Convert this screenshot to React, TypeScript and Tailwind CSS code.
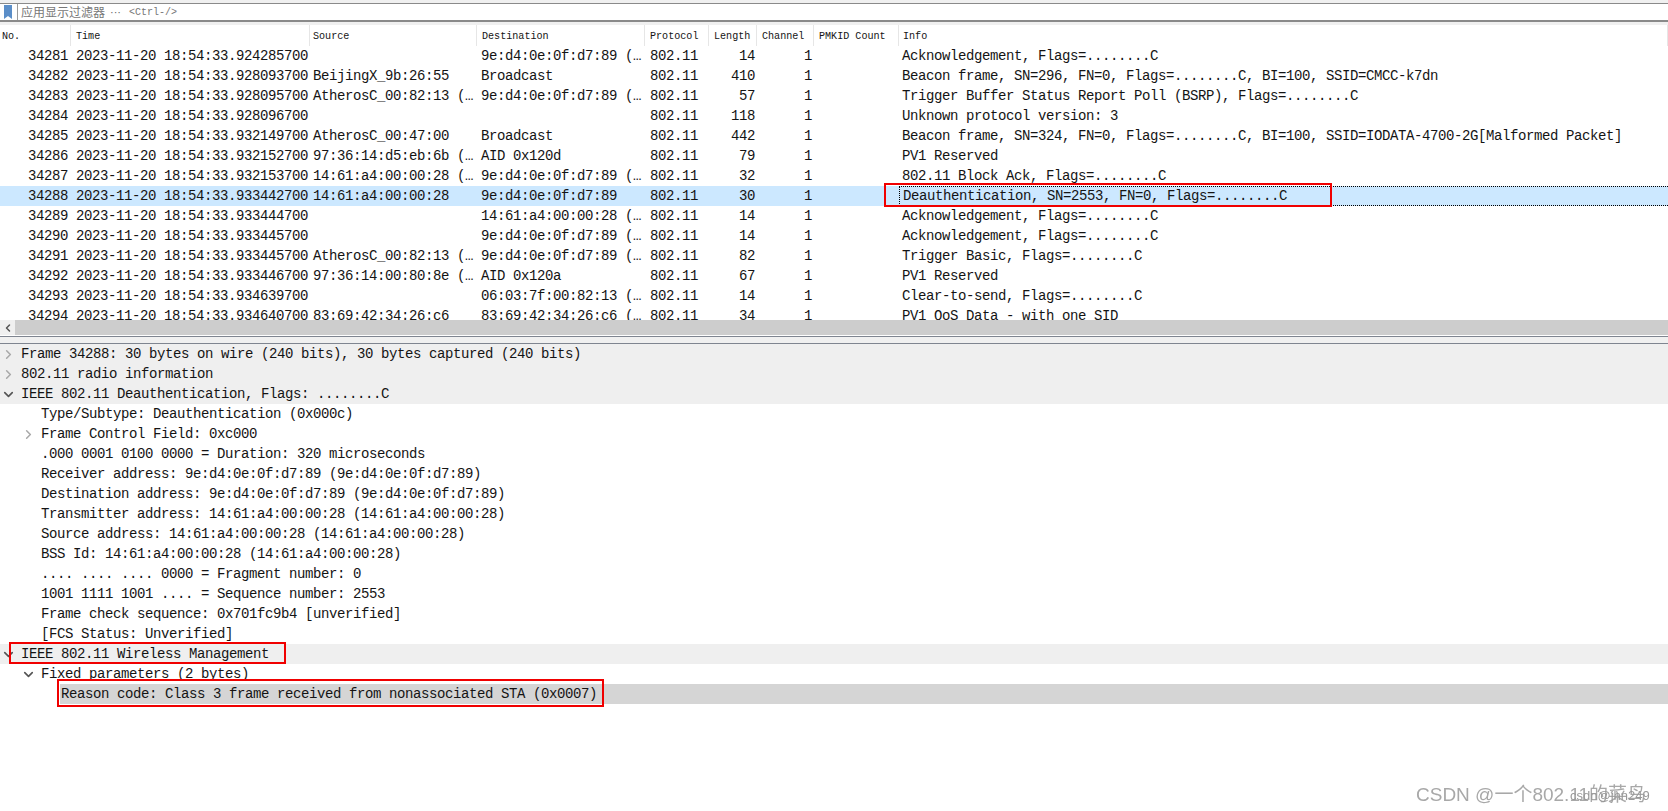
import { ChevronDown, ChevronLeft, ChevronRight } from "lucide-react";

const packets = [
  ["34281", "2023-11-20 18:54:33.924285700", "", "9e:d4:0e:0f:d7:89 (…", "802.11", "14", "1", "Acknowledgement, Flags=........C"],
  ["34282", "2023-11-20 18:54:33.928093700", "BeijingX_9b:26:55", "Broadcast", "802.11", "410", "1", "Beacon frame, SN=296, FN=0, Flags=........C, BI=100, SSID=CMCC-k7dn"],
  ["34283", "2023-11-20 18:54:33.928095700", "AtherosC_00:82:13 (…", "9e:d4:0e:0f:d7:89 (…", "802.11", "57", "1", "Trigger Buffer Status Report Poll (BSRP), Flags=........C"],
  ["34284", "2023-11-20 18:54:33.928096700", "", "", "802.11", "118", "1", "Unknown protocol version: 3"],
  ["34285", "2023-11-20 18:54:33.932149700", "AtherosC_00:47:00", "Broadcast", "802.11", "442", "1", "Beacon frame, SN=324, FN=0, Flags=........C, BI=100, SSID=IODATA-4700-2G[Malformed Packet]"],
  ["34286", "2023-11-20 18:54:33.932152700", "97:36:14:d5:eb:6b (…", "AID 0x120d", "802.11", "79", "1", "PV1 Reserved"],
  ["34287", "2023-11-20 18:54:33.932153700", "14:61:a4:00:00:28 (…", "9e:d4:0e:0f:d7:89 (…", "802.11", "32", "1", "802.11 Block Ack, Flags=........C"],
  ["34288", "2023-11-20 18:54:33.933442700", "14:61:a4:00:00:28", "9e:d4:0e:0f:d7:89", "802.11", "30", "1", "Deauthentication, SN=2553, FN=0, Flags=........C"],
  ["34289", "2023-11-20 18:54:33.933444700", "", "14:61:a4:00:00:28 (…", "802.11", "14", "1", "Acknowledgement, Flags=........C"],
  ["34290", "2023-11-20 18:54:33.933445700", "", "9e:d4:0e:0f:d7:89 (…", "802.11", "14", "1", "Acknowledgement, Flags=........C"],
  ["34291", "2023-11-20 18:54:33.933445700", "AtherosC_00:82:13 (…", "9e:d4:0e:0f:d7:89 (…", "802.11", "82", "1", "Trigger Basic, Flags=........C"],
  ["34292", "2023-11-20 18:54:33.933446700", "97:36:14:00:80:8e (…", "AID 0x120a", "802.11", "67", "1", "PV1 Reserved"],
  ["34293", "2023-11-20 18:54:33.934639700", "", "06:03:7f:00:82:13 (…", "802.11", "14", "1", "Clear-to-send, Flags=........C"],
  ["34294", "2023-11-20 18:54:33.934640700", "83:69:42:34:26:c6", "83:69:42:34:26:c6 (…", "802.11", "34", "1", "PV1 QoS Data - with one SID"],
];

const headers = [
  ["No.", "pl-[2px]"],
  ["Time", "pl-[5px]"],
  ["Source", "pl-[3px]"],
  ["Destination", "pl-[5px]"],
  ["Protocol", "pl-[5px]"],
  ["Length", "pl-[5px]"],
  ["Channel", "pl-[5px]"],
  ["PMKID Count", "pl-[5px]"],
  ["Info", "pl-[4px]"],
];

const cols = "grid grid-cols-[71px_239px_167px_168px_64px_48px_57px_85px_1fr]";

type Node = { text: string; level: number; icon?: "open" | "closed"; section?: boolean; active?: boolean };

const tree: Node[] = [
  { text: "Frame 34288: 30 bytes on wire (240 bits), 30 bytes captured (240 bits)", level: 0, icon: "closed", section: true },
  { text: "802.11 radio information", level: 0, icon: "closed", section: true },
  { text: "IEEE 802.11 Deauthentication, Flags: ........C", level: 0, icon: "open", section: true },
  { text: "Type/Subtype: Deauthentication (0x000c)", level: 1 },
  { text: "Frame Control Field: 0xc000", level: 1, icon: "closed" },
  { text: ".000 0001 0100 0000 = Duration: 320 microseconds", level: 1 },
  { text: "Receiver address: 9e:d4:0e:0f:d7:89 (9e:d4:0e:0f:d7:89)", level: 1 },
  { text: "Destination address: 9e:d4:0e:0f:d7:89 (9e:d4:0e:0f:d7:89)", level: 1 },
  { text: "Transmitter address: 14:61:a4:00:00:28 (14:61:a4:00:00:28)", level: 1 },
  { text: "Source address: 14:61:a4:00:00:28 (14:61:a4:00:00:28)", level: 1 },
  { text: "BSS Id: 14:61:a4:00:00:28 (14:61:a4:00:00:28)", level: 1 },
  { text: ".... .... .... 0000 = Fragment number: 0", level: 1 },
  { text: "1001 1111 1001 .... = Sequence number: 2553", level: 1 },
  { text: "Frame check sequence: 0x701fc9b4 [unverified]", level: 1 },
  { text: "[FCS Status: Unverified]", level: 1 },
  { text: "IEEE 802.11 Wireless Management", level: 0, icon: "open", section: true },
  { text: "Fixed parameters (2 bytes)", level: 1, icon: "open" },
  { text: "Reason code: Class 3 frame received from nonassociated STA (0x0007)", level: 2, active: true },
];

function TreeRow({ node }: { node: Node }) {
  const indent = node.level === 0 ? "pl-[21px]" : node.level === 1 ? "pl-[41px]" : "pl-[61px]";
  const arrowAt = node.level === 0 ? "left-[1px]" : "left-[21px]";
  return (
    <div className={`relative h-5 leading-5 whitespace-pre ${indent} ${node.section ? "bg-[#efefef]" : ""}`}>
      {node.icon === "closed" && <ChevronRight size={15} strokeWidth={2.4} className={`absolute top-[3px] text-[#a8a8a8] ${arrowAt}`} />}
      {node.icon === "open" && <ChevronDown size={15} strokeWidth={2.6} className={`absolute top-[3px] text-[#555] ${arrowAt}`} />}
      {node.active && <div className="absolute inset-y-0 left-[60px] right-0 bg-[#d5d5d5]" />}
      <span className="relative">{node.text}</span>
    </div>
  );
}

export default function App() {
  return (
    <div className="relative h-[811px] w-[1668px] overflow-hidden bg-white font-['Liberation_Mono',monospace] text-[14px] tracking-[-0.4px] text-[#141414]">
      {/* filter bar */}
      <div className="h-1 border-b border-[#8a8a8a] bg-[#f0f0f0]" />
      <div className="flex h-[18px] items-center border-b-2 border-[#8a8a8a] bg-white">
        <svg width="17" height="16" viewBox="0 0 17 16" className="shrink-0">
          <path d="M4 1h8v14l-4-3-4 3z" fill="#5b8ec8" />
        </svg>
        <div className="h-full w-px bg-[#9a9a9a]" />
        <span className="ml-[3px] font-['Noto_Sans_CJK_SC',sans-serif] text-[12px] tracking-normal text-[#777]">应用显示过滤器</span>
        <span className="ml-[5px] font-['Liberation_Sans',sans-serif] text-[11px] tracking-normal text-[#666]">···</span>
        <span className="ml-[8px] text-[10px] tracking-normal text-[#777]">{"<Ctrl-/>"}</span>
      </div>
      <div className="h-[3px] bg-[#f0f0f0]" />

      {/* packet list */}
      <div className={`${cols} h-[21px] items-center bg-white text-[10.1px] tracking-normal`}>
        {headers.map(([label, pad]) => (
          <div key={label} className={`flex h-[21px] items-center border-r border-[#e6e6e6] pt-[2px] ${pad}`}>{label}</div>
        ))}
      </div>
      <div className="h-[274px] overflow-hidden">
        {packets.map((p) => {
          const selected = p[0] === "34288";
          return (
            <div key={p[0]} className={`${cols} h-5 leading-5 whitespace-pre ${selected ? "bg-[#cce8ff]" : ""}`}>
              <div className="pr-[3px] text-right">{p[0]}</div>
              <div className="pl-[5px]">{p[1]}</div>
              <div className="pl-[3px]">{p[2]}</div>
              <div className="pl-[4px]">{p[3]}</div>
              <div className="pl-[5px]">{p[4]}</div>
              <div className="pr-[2px] text-right">{p[5]}</div>
              <div className="pr-[2px] text-right">{p[6]}</div>
              <div />
              <div className={`pl-[3px] ${selected ? "border-y border-l border-dotted border-black leading-[18px]" : ""}`}>{p[7]}</div>
            </div>
          );
        })}
      </div>

      {/* horizontal scrollbar */}
      <div className="flex h-[15px] bg-[#f0f0f0]">
        <div className="flex w-[15px] items-center justify-center">
          <ChevronLeft size={12} strokeWidth={3} className="text-[#555]" />
        </div>
        <div className="flex-1 bg-[#cdcdcd]" />
      </div>
      <div className="mt-px h-[8px] border-y border-[#7f8590] bg-[#f0f0f0]" />

      {/* packet details */}
      <div>
        {tree.map((node) => (
          <TreeRow key={node.text} node={node} />
        ))}
      </div>

      {/* red annotations */}
      <div className="absolute left-[884px] top-[183px] h-6 w-[448px] border-2 border-[#f00000]" />
      <div className="absolute left-[9px] top-[642px] h-[22px] w-[277px] border-2 border-[#f00000]" />
      <div className="absolute left-[57px] top-[679px] h-7 w-[547px] border-2 border-[#f00000]" />

      {/* watermark */}
      <div className="absolute left-[1416px] top-[781px] font-['Liberation_Sans','Noto_Sans_CJK_SC',sans-serif] text-[19px] tracking-normal whitespace-pre text-[#a8a8a8] blur-[0.4px]">CSDN @一个802.11的菜鸟</div>
      <div className="absolute left-[1570px] top-[786px] font-['Liberation_Sans',sans-serif] text-[13px] tracking-normal whitespace-pre text-[#999] blur-[0.4px]">csdn@jhn249</div>
    </div>
  );
}
